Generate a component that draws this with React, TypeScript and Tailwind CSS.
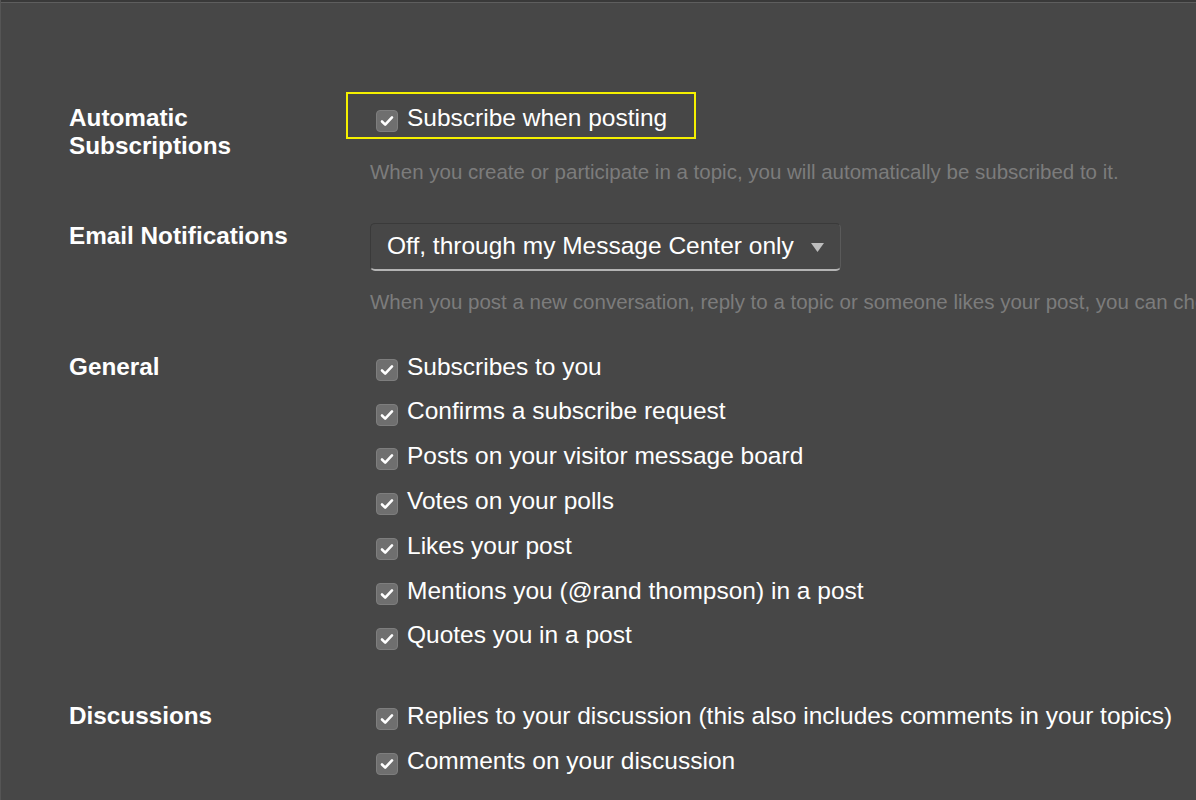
type Row = { label: string };

const generalRows: Row[] = [
  { label: "Subscribes to you" },
  { label: "Confirms a subscribe request" },
  { label: "Posts on your visitor message board" },
  { label: "Votes on your polls" },
  { label: "Likes your post" },
  { label: "Mentions you (@rand thompson) in a post" },
  { label: "Quotes you in a post" },
];

const discussionRows: Row[] = [
  { label: "Replies to your discussion (this also includes comments in your topics)" },
  { label: "Comments on your discussion" },
];

// grey rounded box with a white tick, sits a little below the text's middle
const Check = () => (
  <span className="flex h-[22px] w-[22px] shrink-0 translate-y-[3px] items-center justify-center rounded-[4px] border border-[#7e7e7e] bg-[#6f6f6f]">
    <svg width="14" height="12" viewBox="0 0 14 12" fill="none">
      <path d="M2 6.5 5.2 9.6 12 2.4" stroke="#ffffff" strokeWidth="2.6" strokeLinecap="round" strokeLinejoin="round" />
    </svg>
  </span>
);

const CheckRow = ({ label }: { label: string }) => (
  <label className="flex h-[44.8px] items-center gap-[9px] pl-[6px]">
    <Check />
    <span className="whitespace-nowrap text-[24.5px] text-white">{label}</span>
  </label>
);

const SectionLabel = ({ children }: { children: React.ReactNode }) => (
  <div className="w-[369px] shrink-0 pl-[68px] text-[24.3px] font-bold leading-[28px] text-white">{children}</div>
);

export default function App() {
  return (
    <div className="h-[800px] w-[1196px] overflow-hidden border-l border-l-[#555555] bg-[#474747] font-['Liberation_Sans',Arial,sans-serif]">
      <div className="h-[2px] bg-[#393939]" />
      <div className="h-[1px] bg-[#5e5e5e]" />

      {/* automatic subscriptions */}
      <div className="mt-[89px] flex">
        <SectionLabel>
          <div className="pt-[12px]">
            Automatic
            <br />
            Subscriptions
          </div>
        </SectionLabel>
        <div className="flex flex-col">
          <div className="-ml-[24px] flex h-[47px] w-[350px] items-center border-2 border-[#f5f000] pl-[28px] pt-[5px]">
            <Check />
            <span className="ml-[9px] whitespace-nowrap text-[24.5px] text-white">Subscribe when posting</span>
          </div>
          <p className="mt-[18px] whitespace-nowrap text-[20.5px] text-[#7c7c7c]">
            When you create or participate in a topic, you will automatically be subscribed to it.
          </p>
        </div>
      </div>

      {/* email notifications */}
      <div className="mt-[35px] flex">
        <SectionLabel>
          <div className="-mt-[1px]">Email Notifications</div>
        </SectionLabel>
        <div className="flex flex-col">
          <button className="flex h-[48px] w-[471px] items-center justify-between rounded-[5px] border border-[#3a3a3a] border-r-[#5a5a5a] border-b-2 border-b-[#b4b4b4] bg-[#474747] pl-[16px] pr-[16px] text-[24.5px] text-white">
            <span>Off, through my Message Center only</span>
            <svg width="13" height="9" viewBox="0 0 13 9" className="mt-[3px]">
              <path d="M0 0h13L6.5 9z" fill="#bdbdbd" />
            </svg>
          </button>
          <p className="mt-[16px] whitespace-nowrap text-[20.5px] text-[#7c7c7c]">
            When you post a new conversation, reply to a topic or someone likes your post, you can choose to be notified by email.
          </p>
        </div>
      </div>

      {/* general */}
      <div className="mt-[27px] flex">
        <SectionLabel>
          <div className="pt-[8px]">General</div>
        </SectionLabel>
        <div className="flex flex-col">
          {generalRows.map((r) => (
            <CheckRow key={r.label} label={r.label} />
          ))}
        </div>
      </div>

      {/* discussions */}
      <div className="mt-[36px] flex">
        <SectionLabel>
          <div className="pt-[8px]">Discussions</div>
        </SectionLabel>
        <div className="flex flex-col">
          {discussionRows.map((r) => (
            <CheckRow key={r.label} label={r.label} />
          ))}
        </div>
      </div>
    </div>
  );
}
